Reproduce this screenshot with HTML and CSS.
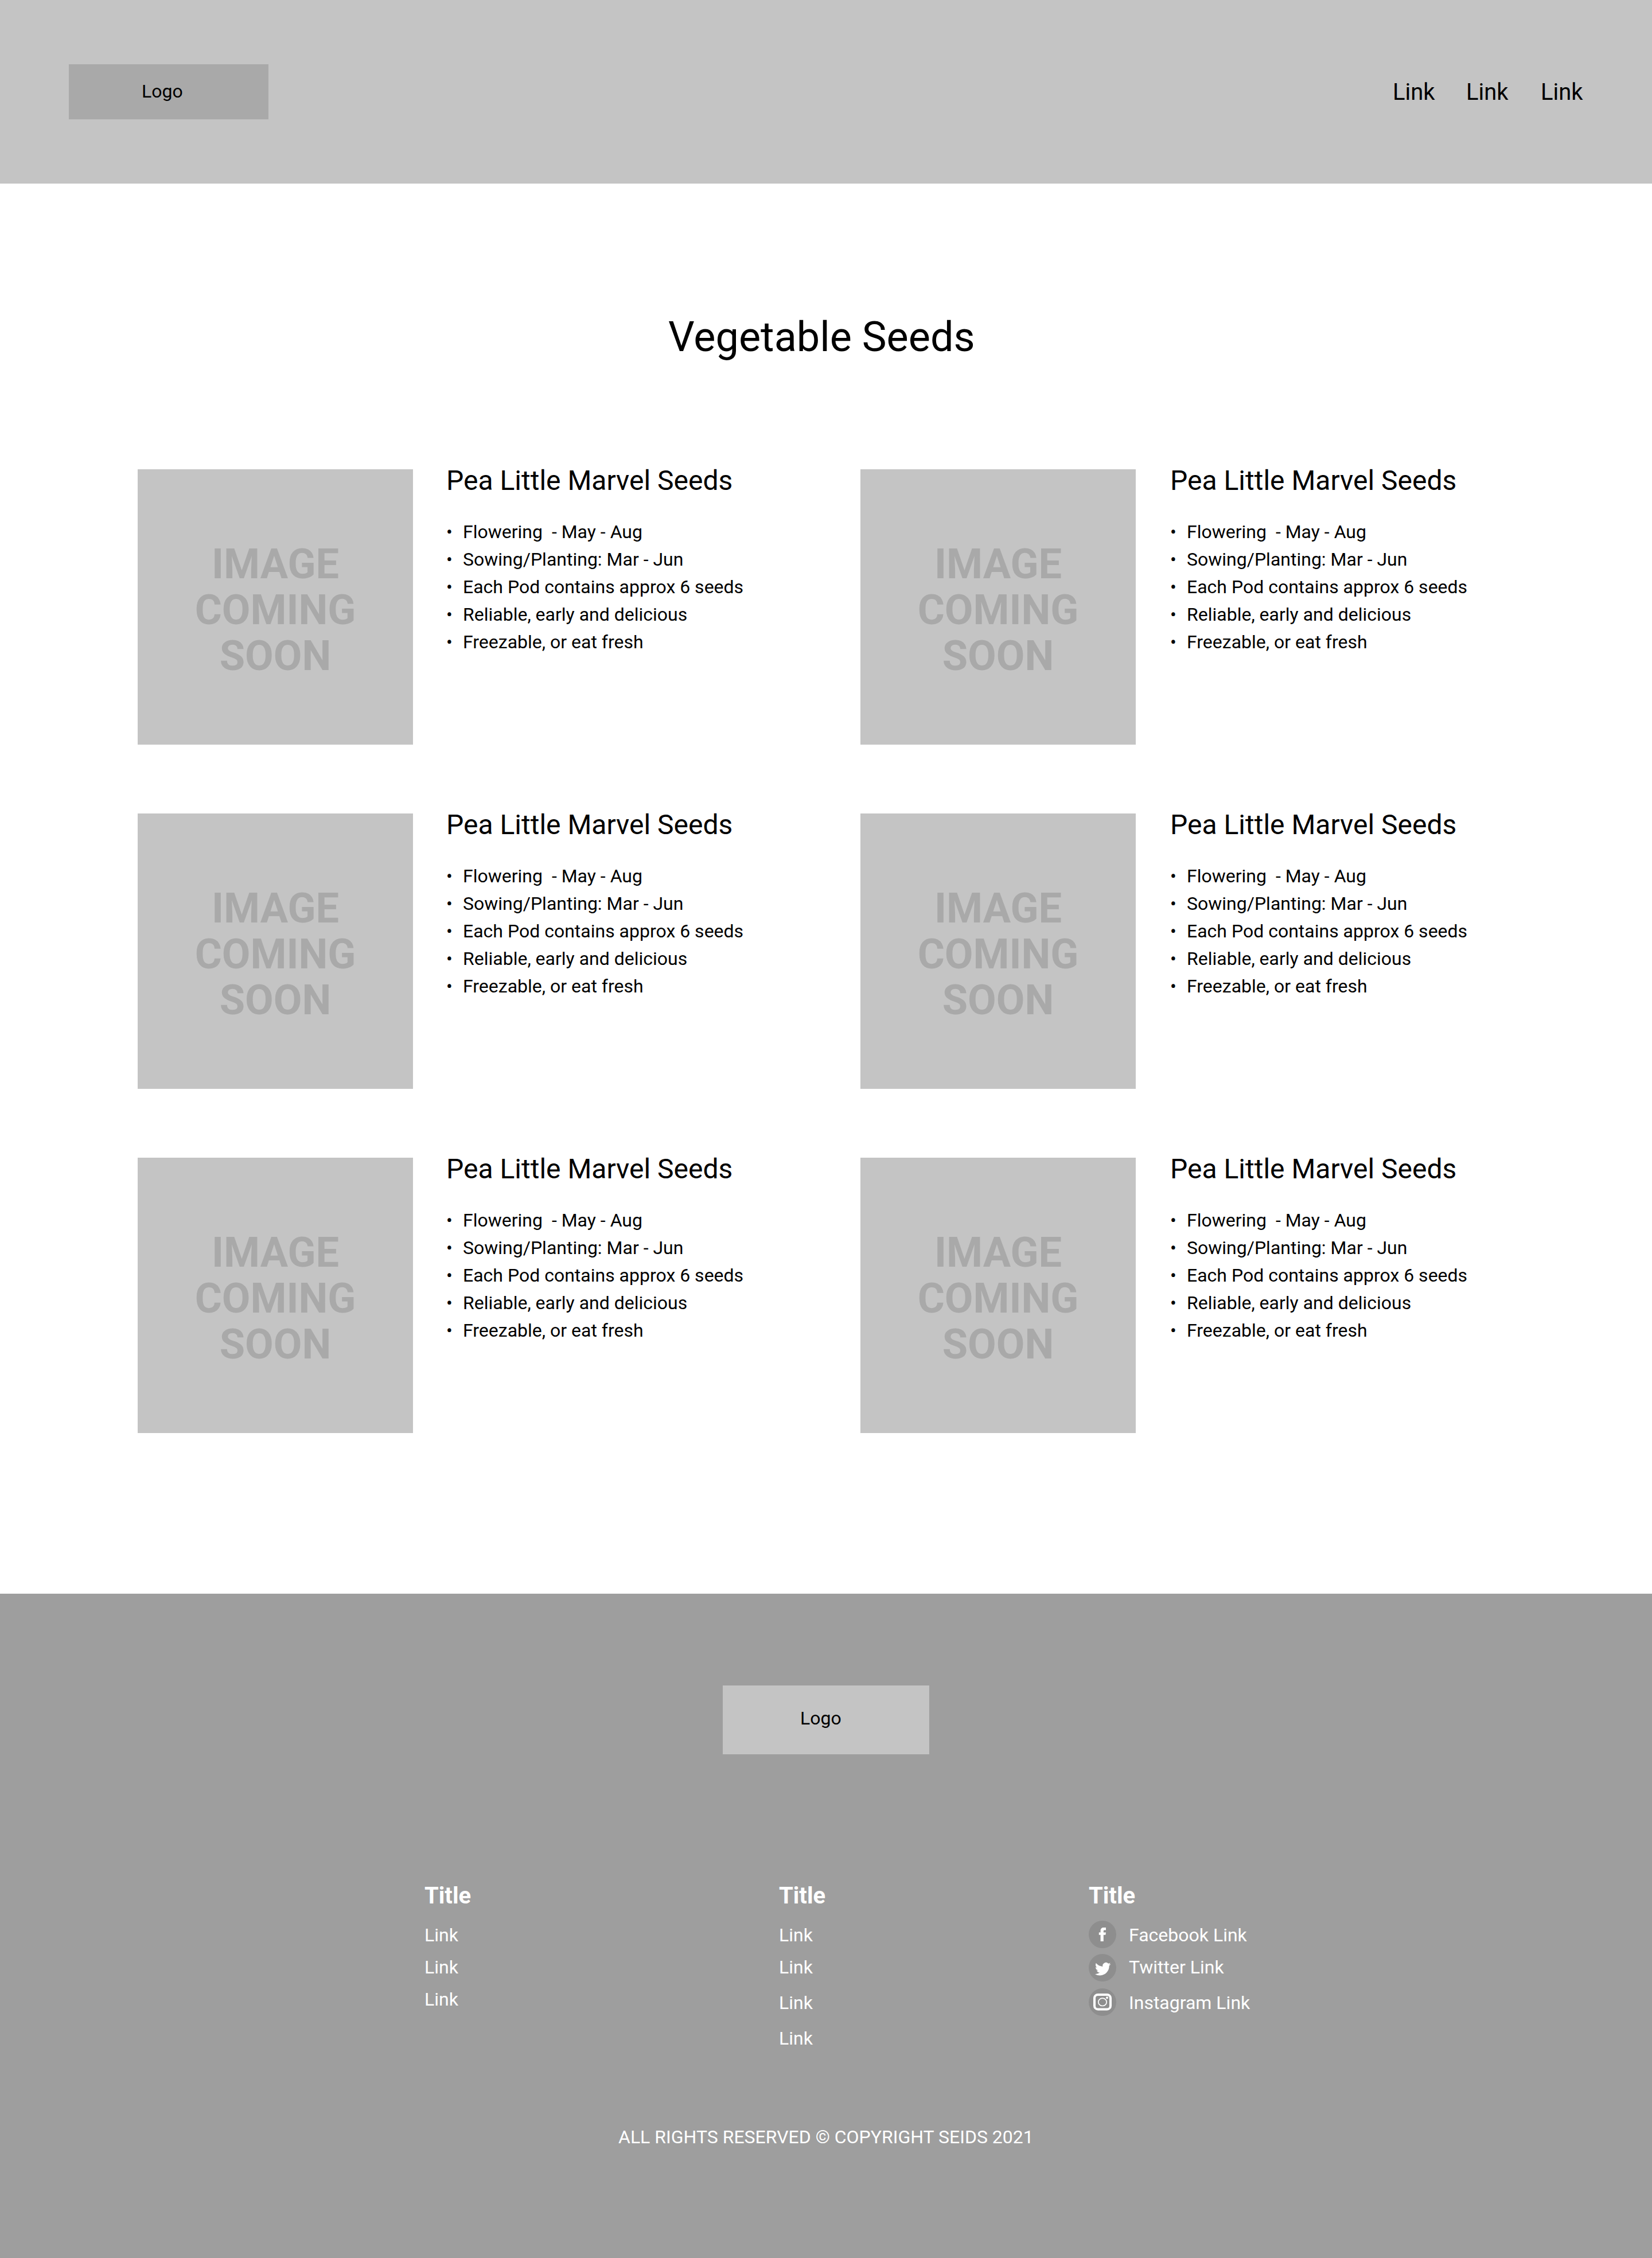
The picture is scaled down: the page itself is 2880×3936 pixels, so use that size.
FILE: index.html
```html
<!DOCTYPE html>
<html lang="en">
<head>
<meta charset="utf-8">
<title>Vegetable Seeds</title>
<link rel="stylesheet" href="styles.css">
</head>
<body>
<header class="header">
  <a class="logo logo-header">Logo</a>
  <nav class="nav"><a>Link</a><a>Link</a><a>Link</a></nav>
</header>
<main class="main">
  <h1 class="page-title">Vegetable Seeds</h1>
  <div class="products">
    <article class="product">
      <div class="placeholder">IMAGE<br>COMING<br>SOON</div>
      <div class="details">
        <h2 class="product-title">Pea Little Marvel Seeds</h2>
        <ul class="facts"><li>Flowering&nbsp; - May - Aug</li><li>Sowing/Planting: Mar - Jun</li><li>Each Pod contains approx 6 seeds</li><li>Reliable, early and delicious</li><li>Freezable, or eat fresh</li></ul>
      </div>
    </article>
    <article class="product">
      <div class="placeholder">IMAGE<br>COMING<br>SOON</div>
      <div class="details">
        <h2 class="product-title">Pea Little Marvel Seeds</h2>
        <ul class="facts"><li>Flowering&nbsp; - May - Aug</li><li>Sowing/Planting: Mar - Jun</li><li>Each Pod contains approx 6 seeds</li><li>Reliable, early and delicious</li><li>Freezable, or eat fresh</li></ul>
      </div>
    </article>
    <article class="product">
      <div class="placeholder">IMAGE<br>COMING<br>SOON</div>
      <div class="details">
        <h2 class="product-title">Pea Little Marvel Seeds</h2>
        <ul class="facts"><li>Flowering&nbsp; - May - Aug</li><li>Sowing/Planting: Mar - Jun</li><li>Each Pod contains approx 6 seeds</li><li>Reliable, early and delicious</li><li>Freezable, or eat fresh</li></ul>
      </div>
    </article>
    <article class="product">
      <div class="placeholder">IMAGE<br>COMING<br>SOON</div>
      <div class="details">
        <h2 class="product-title">Pea Little Marvel Seeds</h2>
        <ul class="facts"><li>Flowering&nbsp; - May - Aug</li><li>Sowing/Planting: Mar - Jun</li><li>Each Pod contains approx 6 seeds</li><li>Reliable, early and delicious</li><li>Freezable, or eat fresh</li></ul>
      </div>
    </article>
    <article class="product">
      <div class="placeholder">IMAGE<br>COMING<br>SOON</div>
      <div class="details">
        <h2 class="product-title">Pea Little Marvel Seeds</h2>
        <ul class="facts"><li>Flowering&nbsp; - May - Aug</li><li>Sowing/Planting: Mar - Jun</li><li>Each Pod contains approx 6 seeds</li><li>Reliable, early and delicious</li><li>Freezable, or eat fresh</li></ul>
      </div>
    </article>
    <article class="product">
      <div class="placeholder">IMAGE<br>COMING<br>SOON</div>
      <div class="details">
        <h2 class="product-title">Pea Little Marvel Seeds</h2>
        <ul class="facts"><li>Flowering&nbsp; - May - Aug</li><li>Sowing/Planting: Mar - Jun</li><li>Each Pod contains approx 6 seeds</li><li>Reliable, early and delicious</li><li>Freezable, or eat fresh</li></ul>
      </div>
    </article>
  </div>
</main>
<footer class="footer">
  <a class="logo logo-footer">Logo</a>
  <div class="columns">
    <section>
      <h3 class="column-title">Title</h3>
      <div class="links links-even"><a>Link</a><a>Link</a><a>Link</a></div>
    </section>
    <section>
      <h3 class="column-title">Title</h3>
      <div class="links"><a>Link</a><a>Link</a><a>Link</a><a>Link</a></div>
    </section>
    <section>
      <h3 class="column-title">Title</h3>
      <div class="social">
        <div class="icons">
          <svg class="icon" viewBox="0 0 48 48"><circle cx="24" cy="24" r="24" fill="#8e8e8e"/><path fill="#fff" d="M20.6 36V24.8h-2.8v-4.4h2.8v-2.6c0-3.8 2-5.8 5.6-5.8H30v4.4h-2.2c-1.5 0-2 .6-2 2v2H30l-.6 4.4h-3.6V36z"/></svg>
          <svg class="icon" viewBox="0 0 48 48"><circle cx="24" cy="24" r="24" fill="#8e8e8e"/><path fill="#fff" transform="translate(10.9 12.4) scale(1.15)" d="M23.953 4.57a10 10 0 01-2.825.775 4.958 4.958 0 002.163-2.723c-.951.555-2.005.959-3.127 1.184a4.92 4.92 0 00-8.384 4.482C7.69 8.095 4.067 6.13 1.64 3.162a4.822 4.822 0 00-.666 2.475c0 1.71.87 3.213 2.188 4.096a4.904 4.904 0 01-2.228-.616v.06a4.923 4.923 0 003.946 4.827 4.996 4.996 0 01-2.212.085 4.936 4.936 0 004.604 3.417 9.867 9.867 0 01-6.102 2.105c-.39 0-.779-.023-1.17-.067a13.995 13.995 0 007.557 2.209c9.053 0 13.998-7.496 13.998-13.985 0-.21 0-.42-.015-.63A9.935 9.935 0 0024 4.59z"/></svg>
          <svg class="icon" viewBox="0 0 48 48"><circle cx="24" cy="24" r="24" fill="#8e8e8e"/><rect x="10" y="11" width="28" height="25.4" rx="6" fill="none" stroke="#fff" stroke-width="4"/><ellipse cx="24" cy="23.8" rx="7.2" ry="6.7" fill="none" stroke="#fff" stroke-width="1.7"/><circle cx="32" cy="16.3" r="2" fill="#fff"/></svg>
        </div>
        <div class="links"><a>Facebook Link</a><a>Twitter Link</a><a>Instagram Link</a></div>
      </div>
    </section>
  </div>
  <p class="copyright">ALL RIGHTS RESERVED © COPYRIGHT SEIDS 2021</p>
</footer>
</body>
</html>
```
FILE: styles.css
```css
* { box-sizing: border-box; }

body {
  margin: 0;
  width: 2880px;
  background: #fff;
  color: #000;
  font-family: Roboto, sans-serif;
  font-size: 32px;
  line-height: 38px;
}

h1, h2, h3, p, ul { margin: 0; padding: 0; font-weight: 400; }

.header {
  display: flex;
  justify-content: space-between;
  align-items: flex-start;
  height: 320px;
  padding: 112px 120px 0;
  background: #c4c4c4;
}

.logo { display: block; }
.logo-header { width: 348px; height: 96px; padding: 28px 0 0 127px; background: #a9a9a9; }
.logo-footer { width: 360px; height: 120px; margin: 0 auto; padding: 38px 0 0 135px; background: #c4c4c4; color: #000; }

.nav {
  display: grid;
  grid-template-columns: 128px 130px 74px;
  padding-top: 25px;
  font-size: 40px;
  line-height: 48px;
}

.main { height: 2458px; padding: 226px 240px 0; }

.page-title { padding-left: 925px; font-size: 72px; line-height: 84px; }

.products {
  display: grid;
  grid-template-columns: 1260px 1fr;
  row-gap: 120px;
  margin-top: 188px;
}

.product { display: flex; gap: 58px; height: 480px; }
.product:nth-child(even) { gap: 60px; }

.placeholder {
  width: 480px;
  padding-top: 126px;
  background: #c4c4c4;
  color: #a9a9a9;
  font-size: 72px;
  font-weight: 700;
  line-height: 80px;
  text-align: center;
}

.product-title { margin-top: -8px; font-size: 48px; line-height: 56px; }

.facts { margin-top: 37px; list-style: none; line-height: 48px; }
.facts li { display: flex; }
.facts li::before { content: "•"; width: 29px; }

.footer { height: 1158px; padding-top: 160px; background: #9e9e9e; color: #fff; }

.columns {
  display: grid;
  grid-template-columns: 618px 540px 1fr;
  height: 359px;
  margin-top: 223px;
  padding-left: 740px;
}

.column-title { font-size: 40px; font-weight: 700; line-height: 48px; }

.links { display: flex; flex-direction: column; gap: 24px; margin-top: 25px; }
.links a:first-child { margin-bottom: -6px; }
.links-even { gap: 18px; }
.links-even a:first-child { margin-bottom: 0; }

.social { display: flex; gap: 22px; }
.icons { display: flex; flex-direction: column; gap: 12px; padding-top: 19px; }
.icon { display: block; width: 48px; height: 48px; }
.icon:first-child { margin-bottom: -2px; }

.copyright { margin-top: 66px; padding-left: 1078px; }
```
